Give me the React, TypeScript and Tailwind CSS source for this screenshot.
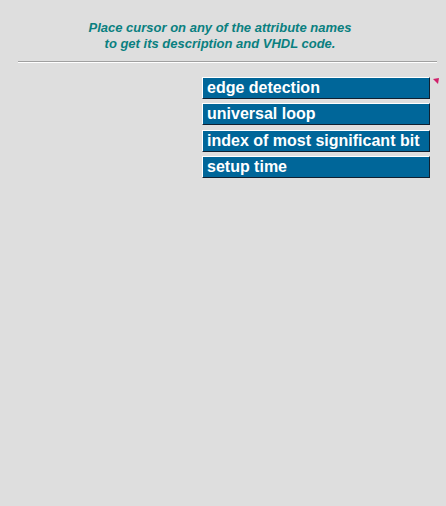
import React from "react";

const items = ["edge detection", "universal loop", "index of most significant bit", "setup time"];

export default function App() {
  return (
    <div className="w-[446px] h-[506px] bg-[#dedede] overflow-hidden" style={{ fontFamily: '"Liberation Sans", Arial, sans-serif' }}>
      <div className="pt-[20px] pr-[6px] text-center text-[13px] leading-[16px] font-bold italic text-[#0a8080]">
        <div>Place cursor on any of the attribute names</div>
        <div>to get its description and VHDL code.</div>
      </div>
      <div className="mt-[9px] ml-[18px] mr-[9px] h-[2px] border-t border-t-[#a0a0a0] border-b border-b-white" />
      <div className="flex mt-[14px]">
        <div className="ml-[202px] w-[228px] flex flex-col gap-[4px]">
          {items.map((t, i) => (
            <div
              key={t}
              className={`h-[22px] bg-[#006699] border border-t-white border-l-white border-r-[#102030] border-b-[#102030] text-white font-bold text-[16px] leading-[19px] pl-[4px] whitespace-nowrap ${i === 2 ? "mt-[1px]" : ""}`}
            >
              {t}
            </div>
          ))}
        </div>
        <div className="ml-[3px] mt-[1px]">
          <svg width="6" height="6" viewBox="0 0 6 6">
            <polygon points="0,1 6,0 5,6" fill="#d0206a" />
          </svg>
        </div>
      </div>
    </div>
  );
}
